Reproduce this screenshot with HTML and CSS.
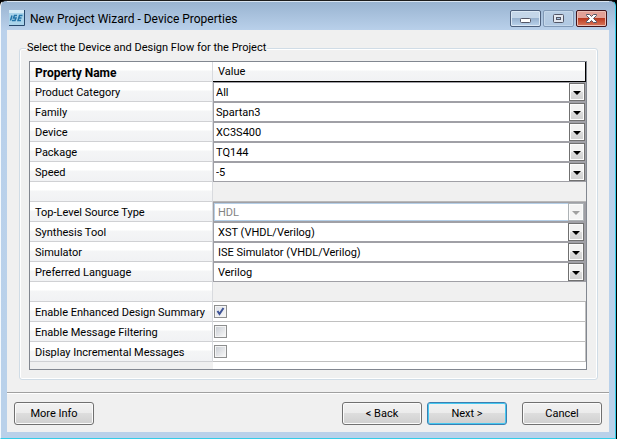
FILE: index.html
```html
<!DOCTYPE html>
<html lang="en">
<head>
<meta charset="utf-8">
<title>New Project Wizard - Device Properties</title>
<link rel="stylesheet" href="styles.css">
</head>
<body>
<div class="window">
  <header class="titlebar">
    <svg class="logo" width="16" height="16" viewBox="0 0 16 16" aria-hidden="true">
      <rect width="16" height="16" fill="#a9d3ea"/>
      <path d="M0 0h16v3H0z" fill="#d5eaf5"/>
      <path d="M15.500 0v15.500H0" fill="none" stroke="#27476b"/>
      <path d="M3 5.500L1.500 10.500M8 5.500H5.500L4.500 8H7L6 10.500H3M13.500 5.500H10.500L9 10.500H12M10 8H12.500" fill="none" stroke="#2374a8" stroke-width="1.500"/>
    </svg>
    <h1 class="title">New Project Wizard - Device Properties</h1>
    <div class="controls">
      <button class="control" type="button" aria-label="Minimize">
        <svg width="13" height="12" viewBox="0 0 13 12"><rect x="1.500" y="6.500" width="10" height="4" rx="1" fill="#fff" stroke="#535666"/></svg>
      </button>
      <button class="control control-dim" type="button" aria-label="Maximize">
        <svg width="13" height="12" viewBox="0 0 13 12"><rect x="1.500" y="2.500" width="10" height="8" rx="1" fill="#e3e8f0" stroke="#535666"/><rect x="4.500" y="5.500" width="4" height="2" fill="#a8c4e2" stroke="#535666"/></svg>
      </button>
      <button class="control control-close" type="button" aria-label="Close">
        <svg width="13" height="12" viewBox="0 0 13 12"><path d="M1.500 2.500h3l2 2 2-2h3v1L8.500 6.500l3 3v1h-3l-2-2-2 2h-3v-1l3-3-3-3z" fill="#fff" stroke="#535666"/></svg>
      </button>
    </div>
  </header>
  <form class="client">
    <main class="content">
      <fieldset class="group">
        <legend>Select the Device and Design Flow for the Project</legend>
        <table class="props">
          <colgroup><col class="name-col"><col></colgroup>
          <thead>
            <tr><th class="name" scope="col">Property Name</th><th class="value-head" scope="col">Value</th></tr>
          </thead>
          <tbody>
            <tr><td class="name"><label for="category">Product Category</label></td><td><div class="combo"><select id="category"><option>All</option></select><span class="arrow"></span></div></td></tr>
            <tr><td class="name"><label for="family">Family</label></td><td><div class="combo"><select id="family"><option>Spartan3</option></select><span class="arrow"></span></div></td></tr>
            <tr><td class="name"><label for="device">Device</label></td><td><div class="combo"><select id="device"><option>XC3S400</option></select><span class="arrow"></span></div></td></tr>
            <tr><td class="name"><label for="package">Package</label></td><td><div class="combo"><select id="package"><option>TQ144</option></select><span class="arrow"></span></div></td></tr>
            <tr><td class="name"><label for="speed">Speed</label></td><td><div class="combo"><select id="speed"><option>-5</option></select><span class="arrow"></span></div></td></tr>
            <tr><td class="name"></td><td class="blank"></td></tr>
            <tr><td class="name"><label for="source">Top-Level Source Type</label></td><td><div class="combo combo-inset combo-off"><select id="source" disabled><option>HDL</option></select><span class="arrow"></span></div></td></tr>
            <tr><td class="name"><label for="synthesis">Synthesis Tool</label></td><td><div class="combo combo-inset"><select id="synthesis"><option>XST (VHDL/Verilog)</option></select><span class="arrow"></span></div></td></tr>
            <tr><td class="name"><label for="simulator">Simulator</label></td><td><div class="combo combo-inset"><select id="simulator"><option>ISE Simulator (VHDL/Verilog)</option></select><span class="arrow"></span></div></td></tr>
            <tr><td class="name"><label for="language">Preferred Language</label></td><td><div class="combo combo-inset"><select id="language"><option>Verilog</option></select><span class="arrow"></span></div></td></tr>
            <tr><td class="name"></td><td class="blank"></td></tr>
            <tr><td class="name"><label for="summary">Enable Enhanced Design Summary</label></td><td class="check"><input type="checkbox" id="summary" checked></td></tr>
            <tr><td class="name"><label for="filtering">Enable Message Filtering</label></td><td class="check"><input type="checkbox" id="filtering"></td></tr>
            <tr><td class="name"><label for="incremental">Display Incremental Messages</label></td><td class="check"><input type="checkbox" id="incremental"></td></tr>
            <tr class="tail"><td class="tail-name"></td><td></td></tr>
          </tbody>
        </table>
      </fieldset>
    </main>
    <footer class="footer">
      <button class="btn btn-info" type="button">More Info</button>
      <button class="btn" type="button">&lt; Back</button>
      <button class="btn btn-default" type="button">Next &gt;</button>
      <button class="btn btn-cancel" type="button">Cancel</button>
    </footer>
  </form>
</div>
</body>
</html>
```

FILE: styles.css
```css
* { box-sizing: border-box; }

body {
  margin: 0;
  background: #000;
  font: 11px/16px Roboto, "Liberation Sans", Arial, sans-serif;
  color: #000;
}

button, select, input { font: inherit; color: inherit; margin: 0; }

.window {
  min-height: 100vh;
  margin-right: 1px;
  padding: 0 6px 6px;
  display: flex;
  flex-direction: column;
  border: 1px solid #35cde8;
  border-top-color: #1c1c1c;
  border-left-color: #f4f9fd;
  border-radius: 6px 6px 0 0;
  background: linear-gradient(#98b3d0, #bad1eb 30px, #b9d1ea);
}

.titlebar {
  height: 29px;
  display: flex;
  align-items: center;
  gap: 5px;
  padding: 5px 2px 0;
  box-shadow: inset 0 1px #d9e5f1;
}

.logo { flex: none; }

.title {
  flex: 1;
  margin: 0;
  padding-top: 1px;
  font: 12px/16px Roboto, "Open Sans", sans-serif;
  white-space: nowrap;
}

.controls { display: flex; gap: 2px; }

.control {
  width: 31px;
  height: 17px;
  padding: 0;
  display: flex;
  align-items: center;
  justify-content: center;
  border: 1px solid #4c5f7c;
  border-radius: 2px;
  background: linear-gradient(#c4d6e9 50%, #98b2cf 50%, #bbd3ec);
  box-shadow: inset 0 0 0 1px #dbe8f5;
}

.control-dim {
  border-color: #8199b6;
  background: linear-gradient(#b9cee4, #b0c8e2);
  box-shadow: inset 0 0 0 1px #c4d7ea;
}

.control-close {
  border-color: #43141b;
  background: linear-gradient(#e3a197 50%, #bb3a20 50%, #d9785c);
  box-shadow: inset 0 0 0 1px #ecbfb5;
}

.client {
  flex: 1;
  display: flex;
  flex-direction: column;
  background: #f0f0f0;
}

.content {
  flex: 1;
  display: flex;
  padding: 10px 11px 12px 12px;
}

.group {
  flex: 1;
  min-width: 0;
  margin: 0;
  padding: 5px 10px 8px 9px;
  border: 1px solid #d0dce6;
  border-radius: 3px;
  box-shadow: inset 0 0 0 1px #fff;
}

.group legend {
  margin-left: -3px;
  padding: 0 1px;
  background: #f0f0f0;
}

.props {
  width: 100%;
  table-layout: fixed;
  border: 1px solid #828790;
  border-spacing: 0;
  background: #fff;
}

.name-col { width: 183px; }

.props th, .props td { height: 20px; padding: 0; text-align: left; }

.props .name {
  padding: 2px 0 0 5px;
  border-right: 1px solid #d8dade;
  border-bottom: 1px solid #d0d1d4;
  background: linear-gradient(#fff 40%, #f4f5f6 50%, #f1f2f4);
  white-space: nowrap;
}

.props th.name { font-size: 12px; }

.props .value-head {
  padding-left: 5px;
  border-right: 1px solid #000;
  border-bottom: 1px solid #000;
  background: linear-gradient(#fff 40%, #f4f5f6 50%, #f1f2f4);
  font-weight: normal;
}

.props .blank {
  border-bottom: 1px solid #b8b8b8;
  background: #f0f0f0;
}

.combo {
  position: relative;
  height: 20px;
  border: 1px solid #a0a0a6;
  background: #fff;
}

.combo select {
  width: 100%;
  height: 18px;
  padding: 1px 20px 0 2px;
  display: block;
  appearance: none;
  border: 0;
  border-radius: 0;
  background: transparent;
  outline: 0;
}

.combo-inset { border-right-width: 2px; }
.combo-inset select { padding-left: 4px; }

.arrow {
  position: absolute;
  top: 0;
  right: 0;
  width: 16px;
  height: 18px;
  display: flex;
  align-items: center;
  justify-content: center;
  border: 1px solid #707070;
  background: linear-gradient(#f2f2f2 50%, #dddddd 50%, #cfcfcf);
  box-shadow: inset 0 0 0 1px #fbfbfb;
  pointer-events: none;
}

.arrow::after {
  content: "";
  margin-top: 2px;
  border: 4px solid transparent;
  border-top-color: #000;
  border-bottom: 0;
}

.combo-off select {
  border: 1px solid #b5cfe7;
  padding-left: 3px;
  color: #838383;
  opacity: 1;
}

.combo-off .arrow { border-color: #adb2b5; background: #f4f4f4; }
.combo-off .arrow::after { border-top-color: #a0a0a0; }

.props .check {
  padding-left: 1px;
  border-right: 1px solid #c0c0c0;
  border-bottom: 1px solid #c0c0c0;
}

.check input {
  width: 13px;
  height: 13px;
  display: block;
  appearance: none;
  border: 1px solid #8e8f8f;
  background: linear-gradient(135deg, #cbcfd5, #f6f6f6) content-box;
  padding: 1px;
  box-shadow: inset 0 0 0 1px #f4f4f4;
}

.check input:checked {
  background:
    url("data:image/svg+xml,%3Csvg xmlns='http://www.w3.org/2000/svg' width='11' height='11' viewBox='0 0 11 11'%3E%3Cpath d='M2.500 5L4.500 8L8.500 2' fill='none' stroke='%233d5295' stroke-width='2'/%3E%3C/svg%3E") no-repeat padding-box,
    linear-gradient(135deg, #dfe2e8, #f6f6f6) content-box;
}

.props .tail td { height: 7px; }
.props .tail .tail-name { background: #f0f0f0; }

.footer {
  display: flex;
  gap: 5px;
  padding: 9px 7px 7px;
  border-top: 1px solid #a0a0a0;
  box-shadow: inset 0 1px #fff;
}

.btn {
  width: 80px;
  height: 23px;
  padding: 0;
  border: 1px solid #707070;
  border-radius: 3px;
  background: linear-gradient(#f2f2f2, #ebebeb 50%, #dddddd 50%, #cfcfcf);
  box-shadow: inset 0 0 0 1px #fbfbfb;
}

.btn-info { margin-right: auto; }
.btn-default { border-color: #3c7fb1; box-shadow: inset 0 0 0 1px #46c8f0; }
.btn-cancel { margin-left: 10px; }
```
